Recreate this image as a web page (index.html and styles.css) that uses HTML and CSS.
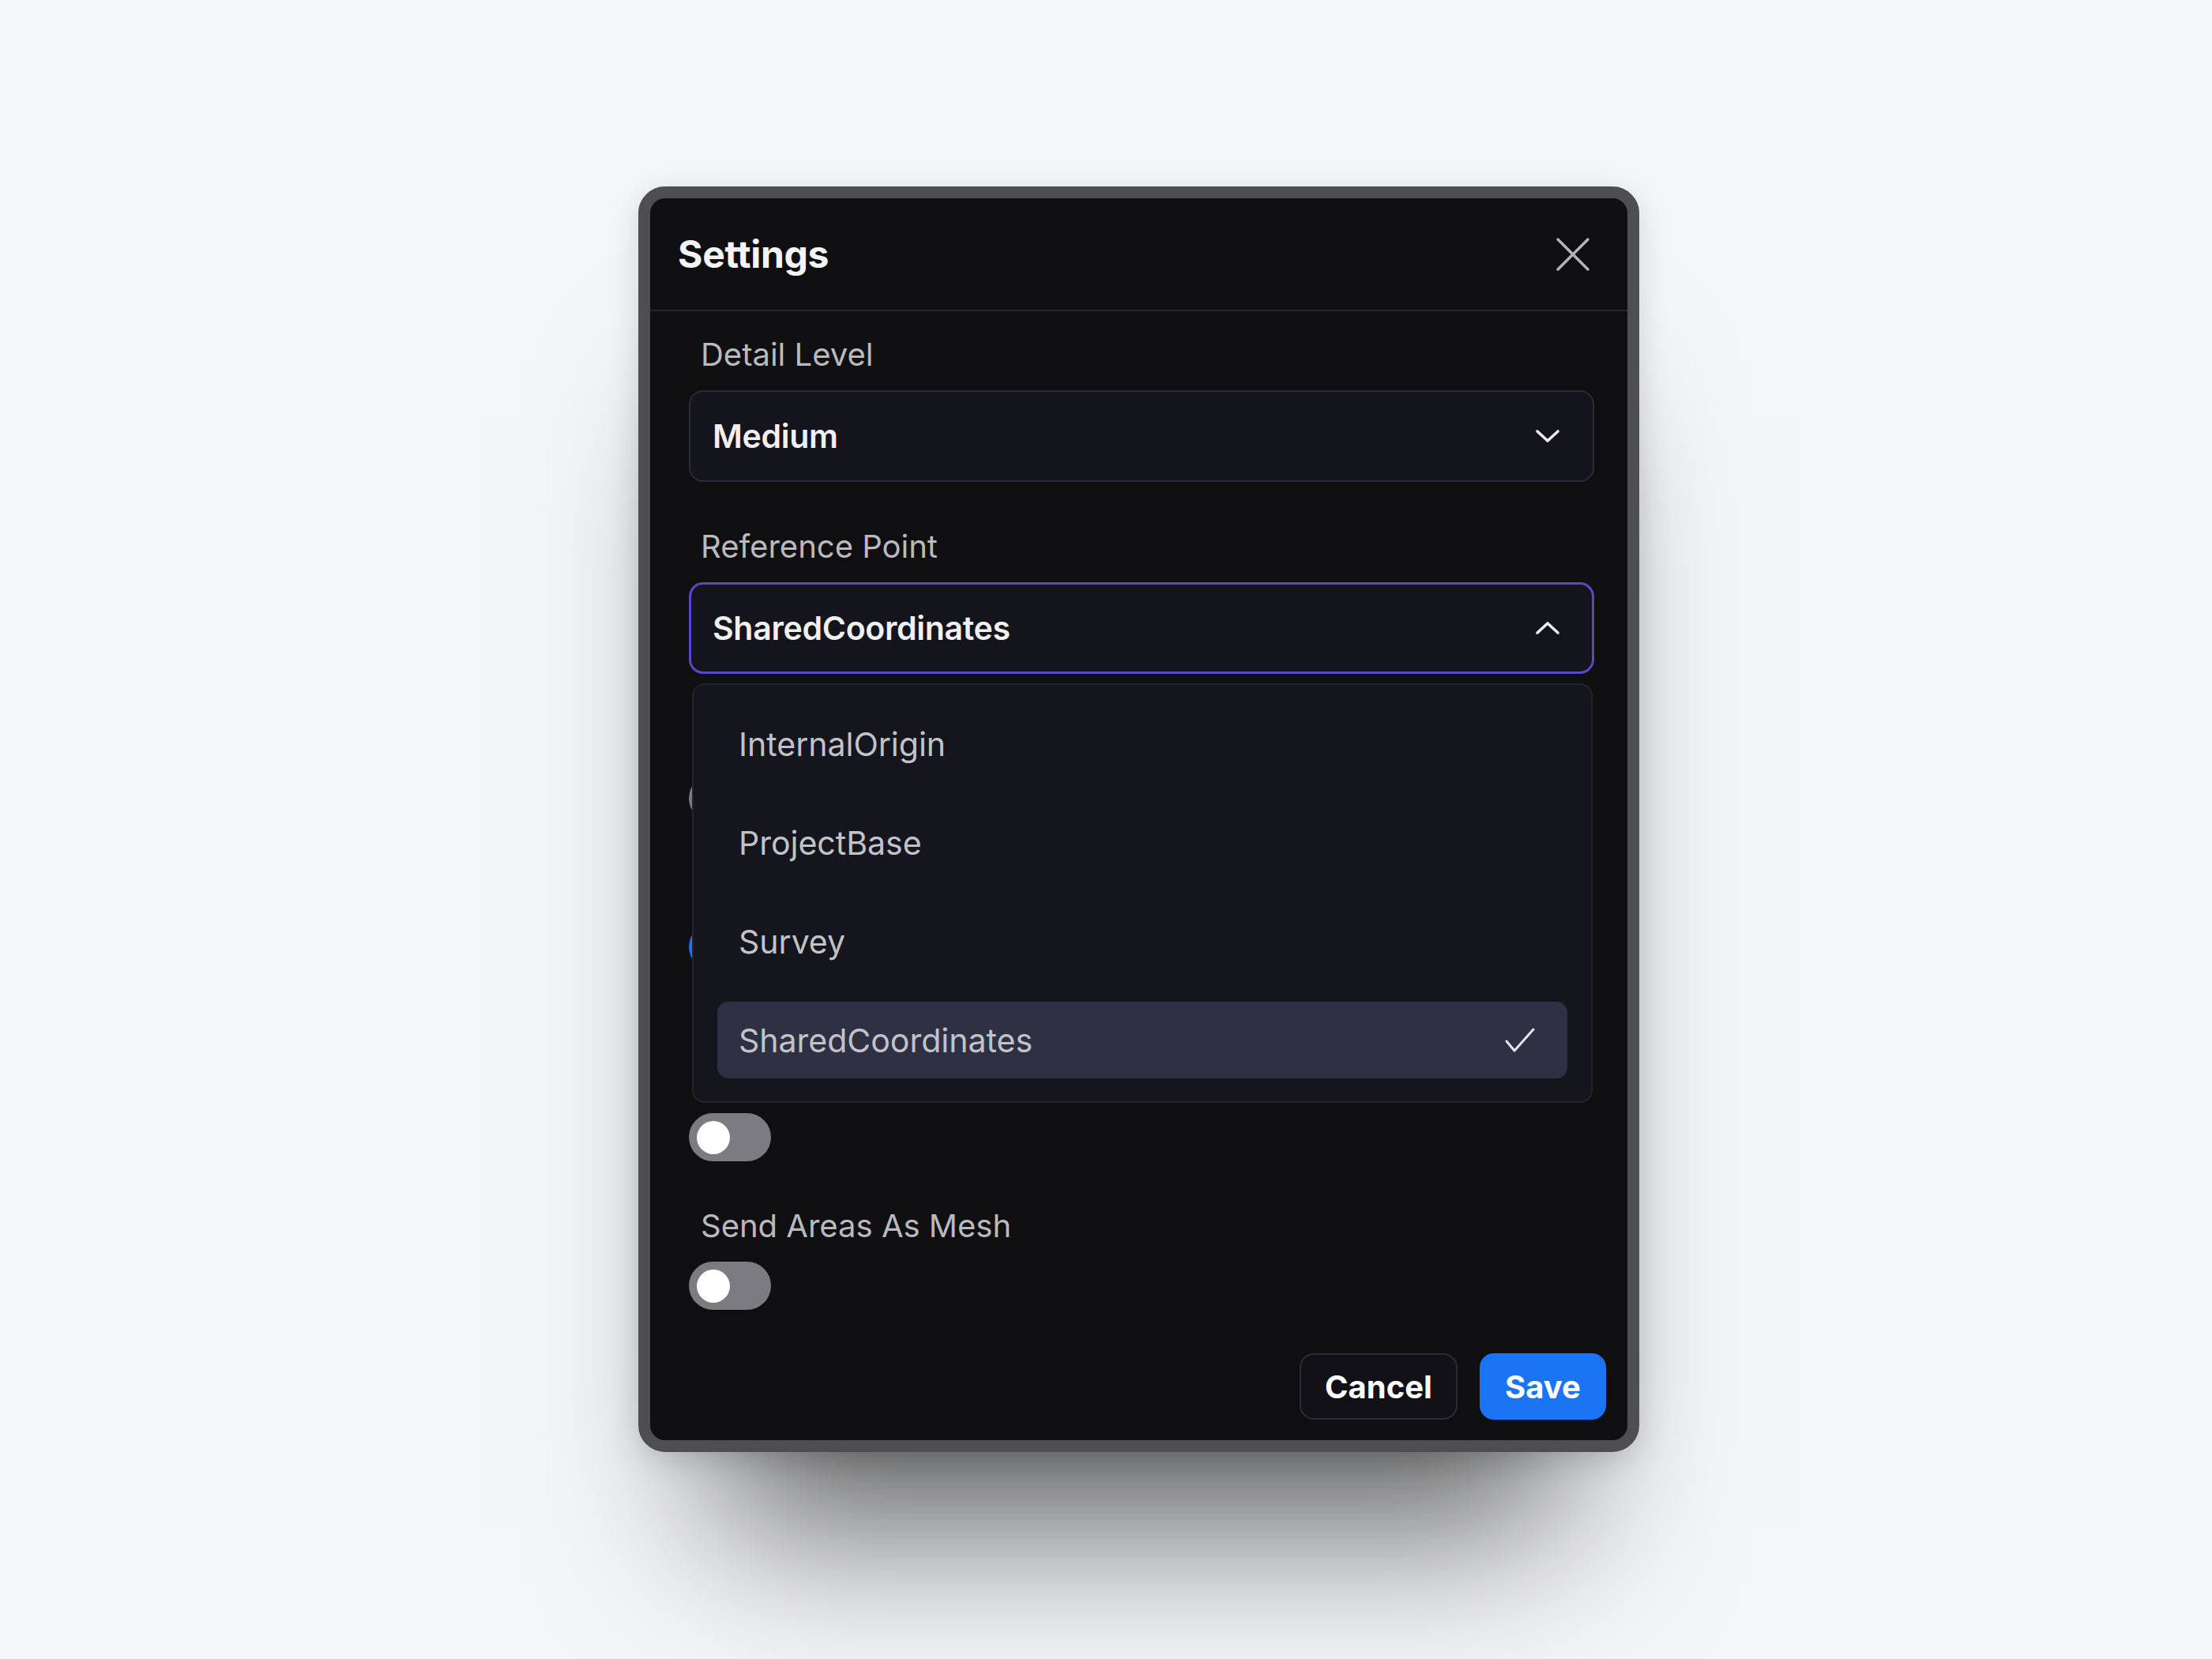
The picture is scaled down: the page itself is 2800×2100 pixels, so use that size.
FILE: index.html
```html
<!DOCTYPE html>
<html lang="en">
<head>
<meta charset="utf-8">
<title>Settings</title>
<link rel="stylesheet" href="styles.css">
</head>
<body>
<div class="stage">
  <div class="dialog">
    <div class="dialog-header">
      <h1 class="dialog-title">Settings</h1>
      <button class="close-btn" aria-label="Close">
        <svg width="44" height="44" viewBox="0 0 44 44"><path d="M3 3 L41 41 M41 3 L3 41" fill="none" stroke="#b3b3b8" stroke-width="3.5" stroke-linecap="round"/></svg>
      </button>
    </div>
    <div class="dialog-body">
      <div class="field">
        <div class="field-label">Detail Level</div>
        <div class="select">
          <span class="select-value">Medium</span>
          <svg class="chev" width="32" height="22" viewBox="0 0 32 22"><path d="M3 5 L16 17 L29 5" fill="none" stroke="#ececf0" stroke-width="3.6" stroke-linecap="round" stroke-linejoin="round"/></svg>
        </div>
      </div>
      <div class="field">
        <div class="field-label">Reference Point</div>
        <div class="select-wrap">
          <div class="select select-open">
            <span class="select-value">SharedCoordinates</span>
            <svg class="chev" width="32" height="22" viewBox="0 0 32 22"><path d="M3 17 L16 5 L29 17" fill="none" stroke="#ececf0" stroke-width="3.6" stroke-linecap="round" stroke-linejoin="round"/></svg>
          </div>
          <div class="menu">
            <div class="menu-item">InternalOrigin</div>
            <div class="menu-item">ProjectBase</div>
            <div class="menu-item">Survey</div>
            <div class="menu-item menu-item-selected">
              <span>SharedCoordinates</span>
              <svg width="42" height="38" viewBox="0 0 42 38"><path d="M4 20 L14 32 L38 5" fill="none" stroke="#e6e6ea" stroke-width="3" stroke-linecap="round" stroke-linejoin="round"/></svg>
            </div>
          </div>
        </div>
      </div>
      <div class="field">
        <div class="field-label" aria-hidden="true"></div>
        <div class="toggle"><span class="knob"></span></div>
      </div>
      <div class="field">
        <div class="field-label" aria-hidden="true"></div>
        <div class="toggle toggle-on"><span class="knob"></span></div>
      </div>
      <div class="field">
        <div class="field-label" aria-hidden="true"></div>
        <div class="field-hint" aria-hidden="true"></div>
        <div class="toggle"><span class="knob"></span></div>
      </div>
      <div class="field">
        <div class="field-label">Send Areas As Mesh</div>
        <div class="toggle"><span class="knob"></span></div>
      </div>
    </div>
    <div class="dialog-footer">
      <button class="btn btn-cancel">Cancel</button>
      <button class="btn btn-save">Save</button>
    </div>
  </div>
</div>
</body>
</html>
```

FILE: styles.css
```css
html, body {
  margin: 0;
  padding: 0;
}
body {
  width: 2800px;
  height: 2100px;
  background: #f5f6f8;
  font-family: Inter, "Noto Sans", "Liberation Sans", sans-serif;
  overflow: hidden;
}
.stage {
  padding: 236px 0 0 808px;
}
.dialog {
  box-sizing: border-box;
  width: 1267px;
  background: #0f0f12;
  border: 15px solid #4e4e51;
  border-radius: 34px;
  box-shadow: 0 193px 200px -100px rgba(0, 0, 0, 0.62), 0 10px 40px rgba(0, 0, 0, 0.14);
  display: flex;
  flex-direction: column;
}
.dialog-header {
  height: 143px;
  box-sizing: border-box;
  padding: 0 47px 0 35px;
  display: flex;
  align-items: center;
  justify-content: space-between;
  border-bottom: 2px solid #25252c;
}
.dialog-title {
  margin: 0;
  font-size: 48px;
  font-weight: 700;
  color: #f4f4f5;
  letter-spacing: -0.3px;
}
.close-btn {
  background: none;
  border: 0;
  padding: 0;
  width: 44px;
  height: 44px;
  display: flex;
}
.dialog-body {
  padding: 30px 42px 0 49px;
  display: flex;
  flex-direction: column;
  gap: 57px;
}
.field {
  display: flex;
  flex-direction: column;
  gap: 20px;
}
.field-label {
  padding-left: 15px;
  height: 50px;
  line-height: 50px;
  font-size: 40px;
  color: #b9b9be;
}
.field-hint {
  height: 33px;
}
.select-wrap {
  position: relative;
}
.select {
  box-sizing: border-box;
  height: 116px;
  background: #14151c;
  border: 2px solid #2a2b34;
  border-radius: 18px;
  padding: 0 41px 0 28px;
  display: flex;
  align-items: center;
  justify-content: space-between;
}
.select-open {
  border: 3px solid #5a46c9;
  padding: 0 40px 0 27px;
}
.select-value {
  font-size: 41px;
  font-weight: 600;
  color: #f0f0f2;
  letter-spacing: -0.3px;
}
.menu {
  position: absolute;
  z-index: 5;
  top: calc(100% + 12px);
  left: 4px;
  right: 2px;
  box-sizing: border-box;
  background: #14151d;
  border: 2px solid #23242d;
  border-radius: 16px;
  padding: 26px 30px 29px 30px;
  display: flex;
  flex-direction: column;
  gap: 28px;
}
.menu-item {
  height: 97px;
  box-sizing: border-box;
  border-radius: 14px;
  padding: 0 39px 0 27px;
  display: flex;
  align-items: center;
  justify-content: space-between;
  font-size: 41px;
  color: #c2c2c9;
}
.menu-item-selected {
  background: #2f3043;
}
.toggle {
  box-sizing: border-box;
  width: 104px;
  height: 61px;
  border-radius: 31px;
  background: #7c7c80;
  padding: 0 10px;
  display: flex;
  align-items: center;
}
.toggle-on {
  background: #1a74f4;
  justify-content: flex-end;
}
.knob {
  width: 42px;
  height: 42px;
  border-radius: 50%;
  background: #ffffff;
}
.dialog-footer {
  padding: 55px 27px 26px 0;
  display: flex;
  justify-content: flex-end;
  gap: 28px;
}
.btn {
  box-sizing: border-box;
  height: 84px;
  border-radius: 18px;
  font-family: Inter, "Noto Sans", "Liberation Sans", sans-serif;
  font-size: 40px;
  font-weight: 700;
  color: #ffffff;
  display: flex;
  align-items: center;
  justify-content: center;
}
.btn-cancel {
  width: 200px;
  background: #111116;
  border: 2px solid #2b2b33;
}
.btn-save {
  width: 160px;
  background: #1a74f4;
  border: 0;
}
```
